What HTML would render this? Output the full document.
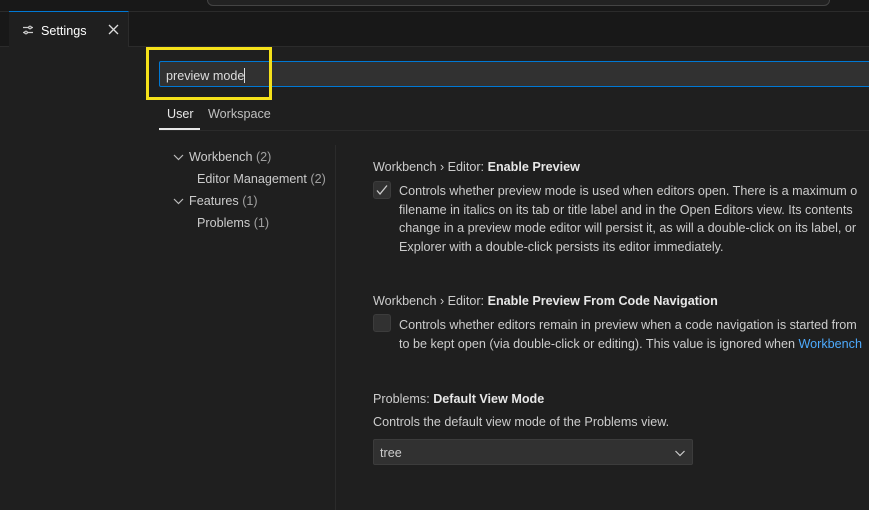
<!DOCTYPE html>
<html><head><style>
*{margin:0;padding:0;box-sizing:border-box}
body{width:869px;height:510px;overflow:hidden;background:#1f1f1f;font-family:"Liberation Sans",sans-serif;color:#cccccc;position:relative}
.a{position:absolute;white-space:nowrap}
.t{font-size:12.6px;margin-top:1px}
b{color:#e7e7e7;font-weight:bold}
</style></head><body>
<div class="a" style="left:0;top:0;width:869px;height:12px;background:#181818;border-bottom:1px solid #2b2b2b"></div>
<div class="a" style="left:207px;top:-10px;width:623px;height:16px;border:1px solid #444;border-radius:6px;background:#222"></div>
<div class="a" style="left:0;top:12px;width:869px;height:35px;background:#181818;border-bottom:1px solid #2b2b2b"></div>
<div class="a" style="left:9px;top:11px;width:120px;height:36px;background:#1f1f1f;border-top:1px solid #0078d4;border-right:1px solid #2b2b2b"></div>
<svg class="a" style="left:22px;top:24px" width="12" height="12" viewBox="0 0 12 12" fill="none" stroke="#ccc" stroke-width="1.2"><path d="M1 3.5h10M1 8.5h10"/><circle cx="8" cy="3.5" r="1.3" fill="#1f1f1f"/><circle cx="4" cy="8.5" r="1.3" fill="#1f1f1f"/></svg>
<div class="a t" style="left:41px;top:23px;color:#fff">Settings</div>
<svg class="a" style="left:108px;top:24px" width="11" height="11" viewBox="0 0 11 11" stroke="#ddd" stroke-width="1.3"><path d="M1 1l9 9M10 1l-9 9"/></svg>

<div class="a" style="left:159px;top:61px;width:720px;height:26px;background:#313131;border:1px solid #0078d4;border-radius:2px"></div>
<div class="a t" style="left:166px;top:67px;color:#ddd">preview mode<span style="display:inline-block;width:1px;height:15px;background:#ddd;vertical-align:-3px"></span></div>
<div class="a" style="left:146px;top:47px;width:126px;height:53px;border:3px solid #f5e11a"></div>

<div class="a t" style="left:167px;top:106px;color:#e7e7e7">User</div>
<div class="a t" style="left:208px;top:106px;color:#c0c0c0">Workspace</div>
<div class="a" style="left:159px;top:130px;width:710px;height:1px;background:#2b2b2b"></div>
<div class="a" style="left:159px;top:128px;width:41px;height:2px;background:#e7e7e7"></div>

<div class="a" style="left:335px;top:145px;width:1px;height:365px;background:#2b2b2b"></div>
<svg class="a" style="left:173px;top:153px" width="11" height="8" viewBox="0 0 11 8" fill="none" stroke="#bbb" stroke-width="1.2"><path d="M1 2l4.5 4.5L10 2"/></svg>
<div class="a t" style="left:189px;top:149px">Workbench <span style="color:#a0a0a0">(2)</span></div>
<div class="a t" style="left:197px;top:171px">Editor Management <span style="color:#a0a0a0">(2)</span></div>
<svg class="a" style="left:173px;top:197px" width="11" height="8" viewBox="0 0 11 8" fill="none" stroke="#bbb" stroke-width="1.2"><path d="M1 2l4.5 4.5L10 2"/></svg>
<div class="a t" style="left:189px;top:193px">Features <span style="color:#a0a0a0">(1)</span></div>
<div class="a t" style="left:197px;top:215px">Problems <span style="color:#a0a0a0">(1)</span></div>

<div class="a t" style="left:373px;top:159px">Workbench › Editor: <b>Enable Preview</b></div>
<div class="a" style="left:373px;top:181px;width:18px;height:18px;background:#313131;border:1px solid #3c3c3c;border-radius:3px"></div>
<svg class="a" style="left:375px;top:183px" width="14" height="14" viewBox="0 0 14 14" fill="none" stroke="#ccc" stroke-width="1.3"><path d="M2 7.5l3 3.5L12 2.5"/></svg>
<div class="a t" style="left:399px;top:181px;line-height:18.7px">Controls whether preview mode is used when editors open. There is a maximum o<br>filename in italics on its tab or title label and in the Open Editors view. Its contents<br>change in a preview mode editor will persist it, as will a double-click on its label, or<br>Explorer with a double-click persists its editor immediately.</div>

<div class="a t" style="left:373px;top:293px">Workbench › Editor: <b>Enable Preview From Code Navigation</b></div>
<div class="a" style="left:373px;top:314px;width:18px;height:18px;background:#313131;border:1px solid #3c3c3c;border-radius:3px"></div>
<div class="a t" style="left:399px;top:315px;line-height:18.7px">Controls whether editors remain in preview when a code navigation is started from<br>to be kept open (via double-click or editing). This value is ignored when <span style="color:#4daafc">Workbench</span></div>

<div class="a t" style="left:373px;top:391px">Problems: <b>Default View Mode</b></div>
<div class="a t" style="left:373px;top:414px">Controls the default view mode of the Problems view.</div>
<div class="a" style="left:373px;top:439px;width:320px;height:26px;background:#313131;border:1px solid #3c3c3c;border-radius:2px"></div>
<div class="a t" style="left:380px;top:445px">tree</div>
<svg class="a" style="left:674px;top:449px" width="12" height="8" viewBox="0 0 12 8" fill="none" stroke="#ccc" stroke-width="1.2"><path d="M1.5 2l4.5 4.5L10.5 2"/></svg>
</body></html>
